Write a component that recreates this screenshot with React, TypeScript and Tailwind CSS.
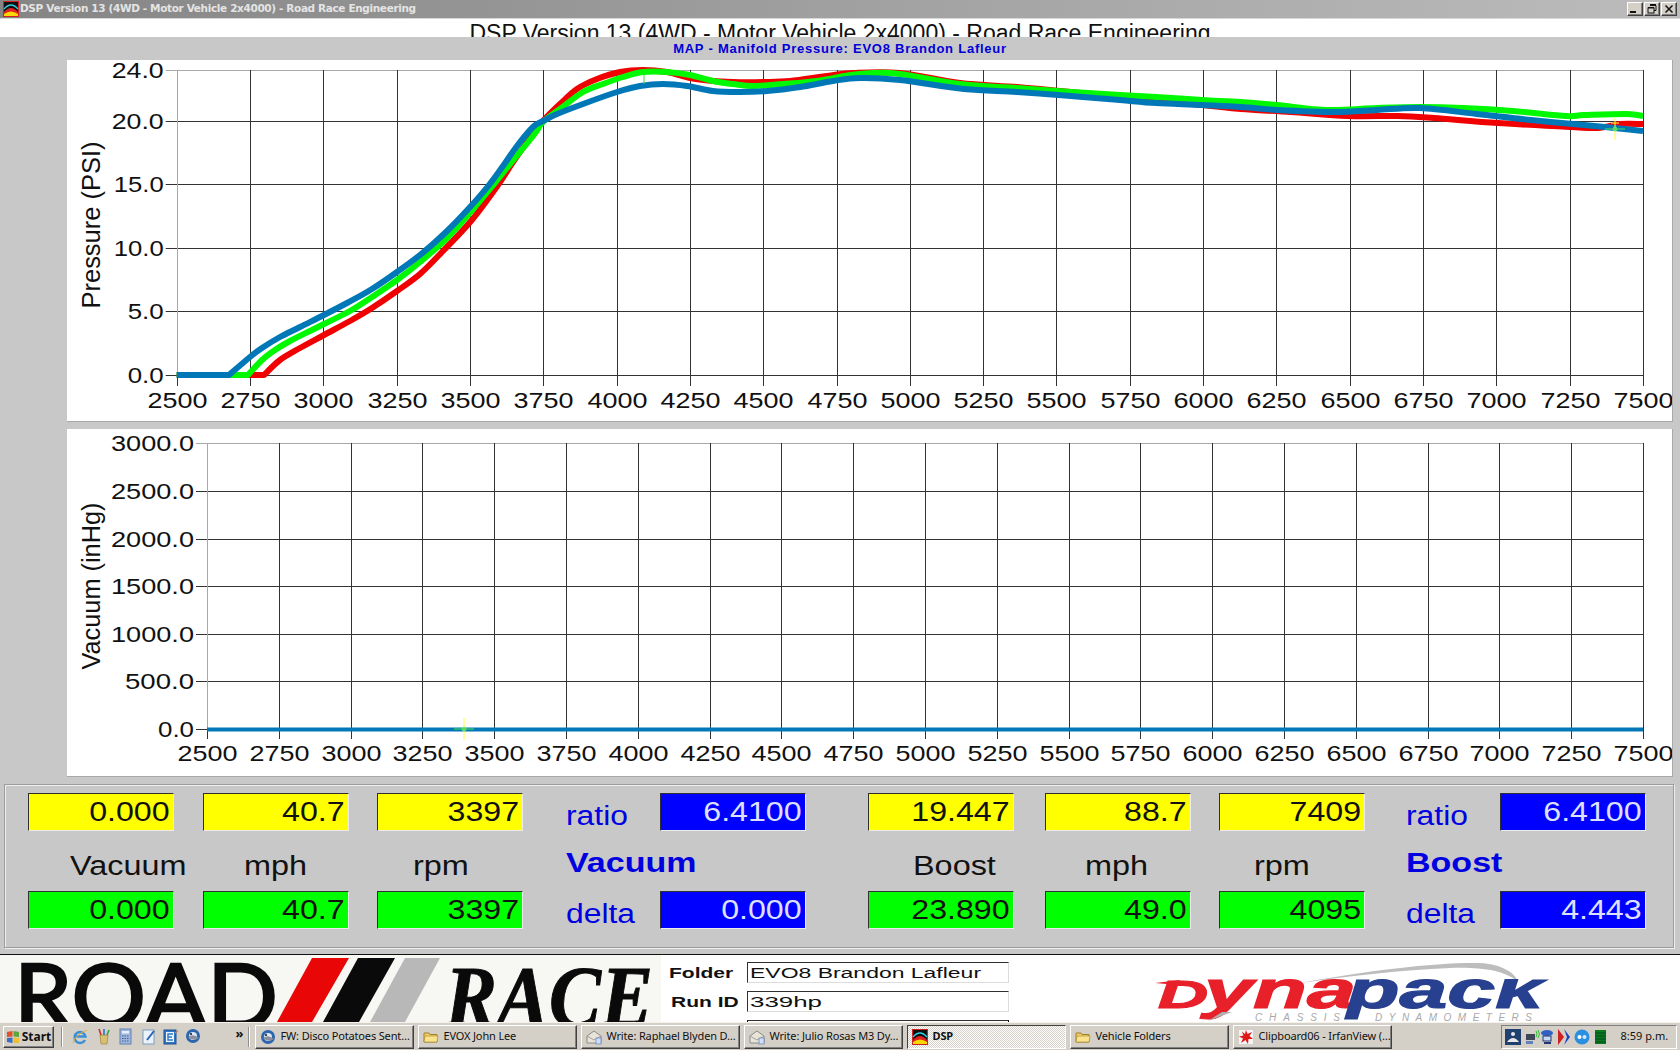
import React from 'react';

const sans = '"Liberation Sans", Arial, sans-serif';

const rpmTicks = Array.from({ length: 21 }, (_, i) => 2500 + i * 250);

const red = '176.7,376 264,376 280,361 300,349 324,336 350,322 372,309 397,292 420,275 443,252 471,222 498,186 513,163 533,135 543,122 560,105 577,90 597,80 620,73 643,71 667,73 690,79 713,82 733,83 763,83 790,82 827,77 853,74 900,74 960,84 1017,88 1071,93 1120,98 1202,106 1241,110 1291,113 1348,117 1398,117 1434,119 1498,124 1570,128 1598,129 1620,125 1643,125';
const green = '176.7,376 248,376 262,361 275,351 290,342 310,332 324,325 350,312 372,298 397,281 420,263 445,241 468,216 494,185 510,165 533,137 543,123 560,110 583,93 603,85 623,78 643,73 667,73 690,76 713,82 733,85 753,87 783,85 817,82 850,76 873,74 900,75 960,85 1017,89 1071,93 1120,96 1156,98 1202,101 1241,103 1277,106 1327,111 1377,109 1420,108 1463,109 1513,112 1566,117 1584,116 1627,115 1643,117';
const blue = '176.7,376 229,376 250,358 262,349 280,338 300,328 324,316 347,304 372,290 397,273 420,256 445,234 471,207 489,186 503,167 517,147 533,128 543,122 557,115 583,105 617,93 640,87 663,85 687,87 713,92 740,93 767,92 800,88 833,82 860,79 900,81 964,90 1017,93 1071,97 1120,101 1156,104 1202,106 1241,108 1277,111 1334,113 1377,111 1420,109 1477,115 1531,121 1584,126 1643,132';

// flat start, then a catmull-rom curve through the rest
function smooth(raw: string) {
  const pts = raw.split(' ').map((p) => p.split(',').map(Number));
  let d = `M${pts[0][0]} ${pts[0][1]} L${pts[1][0]} ${pts[1][1]}`;
  for (let i = 1; i < pts.length - 1; i++) {
    const a = i === 1 ? pts[1] : pts[i - 1];
    const b = pts[i];
    const c = pts[i + 1];
    const e = pts[i + 2] || c;
    const c1x = b[0] + (c[0] - a[0]) / 6;
    const c1y = b[1] + (c[1] - a[1]) / 6;
    const c2x = c[0] - (e[0] - b[0]) / 6;
    const c2y = c[1] - (e[1] - b[1]) / 6;
    d += ` C${c1x.toFixed(1)} ${c1y.toFixed(1)} ${c2x.toFixed(1)} ${c2y.toFixed(1)} ${c[0]} ${c[1]}`;
  }
  return d;
}

function Chart(props: {
  top: number;
  height: number;
  left: number;
  yTicks: { label: string; y: number; labelWidth: number }[];
  xLabelY: number;
  tickEnd: number;
  title: string;
  titleY: number;
  titleLen: number;
  children?: React.ReactNode;
}) {
  const { top, height, left, yTicks, xLabelY, tickEnd, title, titleY, titleLen, children } = props;
  const step = (1643 - left) / 20;
  const bottom = yTicks[yTicks.length - 1].y;
  const ceil = yTicks[0].y;
  return (
    <div className="bg-white border-r border-b border-[#a8a8a8]" style={{ height }}>
      <svg width="1605" height={height - 1} viewBox={`67 ${top} 1605 ${height - 1}`} className="block">
        <g fontFamily={sans} fill="#111">
          <text transform={`translate(100 ${titleY}) rotate(-90)`} fontSize="26" textAnchor="middle" textLength={titleLen} lengthAdjust="spacingAndGlyphs">
            {title}
          </text>
          {yTicks.map((t) => (
            <g key={t.label}>
              <text x={left - 13} y={t.y + 8} fontSize="22" textAnchor="end" textLength={t.labelWidth} lengthAdjust="spacingAndGlyphs">
                {t.label}
              </text>
              <line x1={left - 11} x2={1643} y1={t.y + 0.5} y2={t.y + 0.5} stroke={t.y === ceil ? '#a8a8a8' : '#333'} />
            </g>
          ))}
          {rpmTicks.map((r, i) => {
            const x = Math.round(left + i * step) + 0.5;
            return (
              <g key={r}>
                <line x1={x} x2={x} y1={ceil} y2={tickEnd} stroke={i === 0 ? '#a8a8a8' : '#333'} />
                <line x1={x} x2={x} y1={bottom} y2={tickEnd} stroke="#333" />
                <text x={x} y={xLabelY} fontSize="22" textAnchor="middle" textLength="60" lengthAdjust="spacingAndGlyphs">
                  {r}
                </text>
              </g>
            );
          })}
        </g>
        {children}
      </svg>
    </div>
  );
}

function Crosshair({ x, y }: { x: number; y: number }) {
  return (
    <g fill="none" strokeWidth="1">
      <line x1={x} x2={x} y1={y - 11} y2={y + 11} stroke="#ffff40" />
      <line x1={x - 10} x2={x + 10} y1={y} y2={y} stroke="#50e050" />
      <circle cx={x} cy={y} r="2" stroke="#60f060" />
    </g>
  );
}

function Stat({ value, kind }: { value: string; kind: 'y' | 'g' | 'b' }) {
  const bg = kind === 'y' ? 'bg-[#ffff00] text-[#111]' : kind === 'g' ? 'bg-[#00ff00] text-[#111]' : 'bg-[#0000ff] text-[#dfe0ff]';
  return (
    <div className={`${bg} w-[146px] h-[38px] flex items-center justify-end pr-[3px] pt-[1px] border border-t-[#303030] border-l-[#303030] border-r-[#ececec] border-b-[#ececec] text-[27px] leading-none`}>
      <span className="inline-block origin-right scale-x-[1.19]">{value}</span>
    </div>
  );
}

function ValueCol({ top, label, pad, bottom, className }: { top: string; label: string; pad: string; bottom: string; className: string }) {
  return (
    <div className={`${className} w-[146px] flex flex-col`}>
      <Stat value={top} kind="y" />
      <div className={`h-[60px] flex items-center pt-[10px] text-[27px] leading-none text-[#111] ${pad}`}>
        <span className="inline-block origin-left scale-x-[1.2]">{label}</span>
      </div>
      <Stat value={bottom} kind="g" />
    </div>
  );
}

function RatioCol({ name, ratio, delta, className }: { name: string; ratio: string; delta: string; className: string }) {
  return (
    <div className={`${className} flex`}>
      <div className="w-[94px] -ml-[1px] flex flex-col text-[#0000e0] text-[27px] leading-none">
        <div className="h-[38px] flex items-center pt-[8px]">
          <span className="inline-block origin-left scale-x-[1.18]">ratio</span>
        </div>
        <div className="h-[60px] flex items-center pt-[4px] font-bold">
          <span className="inline-block origin-left scale-x-[1.26]">{name}</span>
        </div>
        <div className="h-[38px] flex items-center pt-[8px]">
          <span className="inline-block origin-left scale-x-[1.18]">delta</span>
        </div>
      </div>
      <div className="flex flex-col gap-[60px]">
        <Stat value={ratio} kind="b" />
        <Stat value={delta} kind="b" />
      </div>
    </div>
  );
}

function DspIcon() {
  return (
    <svg width="16" height="16" viewBox="0 0 16 16" className="shrink-0">
      <rect width="16" height="16" fill="#d02020" />
      <rect x="1" y="1" width="14" height="14" fill="#101010" />
      <path d="M1 11 Q8 3 15 11 V15 H1 Z" fill="#e02020" />
      <path d="M1 13 Q8 8 15 13 V15 H1 Z" fill="#f8d800" />
      <path d="M1 8 Q8 0 15 8" fill="none" stroke="#30d0e0" strokeWidth="1.5" />
    </svg>
  );
}

function FolderIcon() {
  return (
    <svg width="16" height="16" viewBox="0 0 16 16" className="shrink-0">
      <path d="M1 4 L6 4 L7 5.5 L14 5.5 L14 13 L1 13 Z" fill="#f0d060" stroke="#a08030" />
      <path d="M2 7 L15 7 L14 13 L1 13 Z" fill="#fbe38c" stroke="#a08030" strokeWidth="0.6" />
    </svg>
  );
}

function MailIcon() {
  return (
    <svg width="16" height="16" viewBox="0 0 16 16" className="shrink-0">
      <path d="M1 7 L8 2 L15 7 L15 14 L1 14 Z" fill="#e8e4d8" stroke="#8a8a8a" />
      <path d="M1 7 L8 11 L15 7" fill="none" stroke="#a0a0a0" />
      <rect x="10" y="9" width="5" height="6" fill="#cfe0f8" stroke="#5070b0" strokeWidth="0.6" />
    </svg>
  );
}

function BirdIcon() {
  return (
    <svg width="16" height="16" viewBox="0 0 16 16" className="shrink-0">
      <circle cx="8" cy="8" r="7" fill="#2a66b0" />
      <circle cx="8" cy="8" r="4" fill="#dfe6f0" />
      <path d="M3 9 Q8 5 14 10 Q8 14 3 9" fill="#8a8f9c" />
      <circle cx="6" cy="6" r="1" fill="#111" />
    </svg>
  );
}

function IrfanIcon() {
  return (
    <svg width="16" height="16" viewBox="0 0 16 16" className="shrink-0">
      <rect x="1" y="1" width="14" height="14" fill="#f4f4f4" />
      <path d="M8 1 L9.5 5 L14 3 L11.5 7 L15 10 L10.5 10 L10 15 L7.5 11 L3 14 L5 9.5 L1 7.5 L5.5 6.5 L4 2.5 L7 5 Z" fill="#e01818" />
    </svg>
  );
}

function QuickIcon({ kind }: { kind: number }) {
  if (kind === 0)
    return (
      <svg width="17" height="17" viewBox="0 0 17 17">
        <path d="M13 12 A5.5 5.5 0 1 1 13.5 8.5 H3" fill="none" stroke="#3a8fd9" strokeWidth="2.4" />
        <path d="M1 15 Q3 7 15 2" fill="none" stroke="#e8b030" strokeWidth="1" />
      </svg>
    );
  if (kind === 1)
    return (
      <svg width="17" height="17" viewBox="0 0 17 17">
        <path d="M5 7 H13 L12 16 H6 Z" fill="#d8c070" stroke="#907830" strokeWidth="0.6" />
        <path d="M6 7 L4 1" stroke="#d03030" strokeWidth="1.6" />
        <path d="M9 7 L9 1" stroke="#3070c0" strokeWidth="1.6" />
        <path d="M12 7 L14 2" stroke="#30a040" strokeWidth="1.6" />
      </svg>
    );
  if (kind === 2)
    return (
      <svg width="17" height="17" viewBox="0 0 17 17">
        <rect x="3" y="1" width="11" height="15" fill="#9fb6de" stroke="#6580b0" />
        <rect x="5" y="3" width="7" height="2.5" fill="#e8f0fc" />
        <path d="M5 8 H12 M5 10.5 H12 M5 13 H12" stroke="#3f5f9c" strokeDasharray="1.5 1" />
      </svg>
    );
  if (kind === 3)
    return (
      <svg width="17" height="17" viewBox="0 0 17 17">
        <rect x="3" y="2" width="11" height="14" fill="#eaf3fb" stroke="#7c9cc0" />
        <path d="M7 12 L14 3" stroke="#2a62b0" strokeWidth="2" />
      </svg>
    );
  if (kind === 4)
    return (
      <svg width="17" height="17" viewBox="0 0 17 17">
        <rect x="2" y="2" width="12" height="14" fill="#2f78c8" stroke="#1f4f90" />
        <rect x="4" y="4" width="8" height="10" fill="#eef4fb" />
        <path d="M11 6 H6 V12 H11 M6 9 H10" fill="none" stroke="#2f78c8" strokeWidth="1.4" />
        <path d="M13 5 L16 3" stroke="#e08040" strokeWidth="1.4" />
      </svg>
    );
  return <BirdIcon />;
}

const taskItems: { label: string; icon: React.ReactNode; active?: boolean }[] = [
  { label: 'FW: Disco Potatoes Sent…', icon: <BirdIcon /> },
  { label: 'EVOX John Lee', icon: <FolderIcon /> },
  { label: 'Write: Raphael Blyden D…', icon: <MailIcon /> },
  { label: 'Write: Julio Rosas M3 Dy…', icon: <MailIcon /> },
  { label: 'DSP', icon: <DspIcon />, active: true },
  { label: 'Vehicle Folders', icon: <FolderIcon /> },
  { label: 'Clipboard06 - IrfanView (…', icon: <IrfanIcon /> },
];

const raised = 'border border-t-white border-l-white border-r-[#404040] border-b-[#404040] shadow-[inset_-1px_-1px_0_#808080]';

function Taskbar() {
  return (
    <div className="h-[28px] shrink-0 flex items-center bg-[#d4d0c8] border-t border-[#f4f2ec] pl-[3px] font-['Noto_Sans',sans-serif] text-[11px] text-[#111]">
      <button className={`${raised} w-[51px] h-[22px] flex items-center justify-center gap-[2px] font-bold text-[12px]`}>
        <svg width="14" height="14" viewBox="0 0 14 14">
          <path d="M1 2 L6.5 1 L6.5 6.5 L1 7 Z" fill="#e0502a" />
          <path d="M7.5 1 L13 2 L13 7 L7.5 6.5 Z" fill="#5aa83c" />
          <path d="M1 8 L6.5 7.5 L6.5 13 L1 12 Z" fill="#3a6fc8" />
          <path d="M7.5 7.5 L13 8 L13 13 L7.5 13 Z" fill="#f0c030" />
        </svg>
        Start
      </button>
      <div className="ml-[7px] w-[2px] h-[20px] border-l border-r border-l-[#909090] border-r-white" />
      <div className="ml-[9px] flex gap-[5.5px]">
        {[0, 1, 2, 3, 4, 5].map((k) => (
          <QuickIcon key={k} kind={k} />
        ))}
      </div>
      <span className="ml-[35px] text-[13px] font-bold leading-none -mt-[7px]">»</span>
      <div className="ml-[5px] w-[2px] h-[20px] border-l border-r border-l-[#909090] border-r-white" />
      <div className="ml-[5px] flex gap-[4px]">
        {taskItems.map((t) => (
          <div
            key={t.label}
            className={`w-[159px] h-[24px] flex items-center gap-[4px] pl-[4px] whitespace-nowrap overflow-hidden tracking-[-0.15px] ${
              t.active
                ? "border border-t-[#404040] border-l-[#404040] border-r-white border-b-white bg-[repeating-conic-gradient(#ffffff_0_25%,#d4d0c8_0_50%)] bg-[length:2px_2px] font-bold"
                : raised
            }`}
          >
            {t.icon}
            <span>{t.label}</span>
          </div>
        ))}
      </div>
      <div className="ml-[109px] w-[176px] h-[24px] flex items-center border border-t-[#808080] border-l-[#808080] border-r-white border-b-white pl-[3px]">
        <svg width="110" height="18" viewBox="0 0 110 18">
          <rect x="0" y="1" width="16" height="16" fill="#204070" />
          <path d="M2 14 Q8 6 14 14 Z" fill="#e8e8e8" />
          <circle cx="8" cy="6" r="2" fill="#e8e8e8" />
          <rect x="21" y="6" width="9" height="6" fill="#404858" />
          <rect x="21" y="13" width="7" height="3" fill="#6080c0" />
          <path d="M31 3 Q33 6 31 9 M33 2 Q36 6 33 10" fill="none" stroke="#30c030" />
          <ellipse cx="42" cy="5" rx="6" ry="3" fill="#3060c0" />
          <rect x="38" y="8" width="8" height="5" fill="#c8d8f0" stroke="#203878" />
          <rect x="39" y="14" width="7" height="2" fill="#203878" />
          <path d="M53 1 L59 9 L53 17 Z" fill="#d02020" />
          <path d="M59 1 L65 9 L59 17 L62 9 Z" fill="#2040c0" />
          <circle cx="77" cy="9" r="7.5" fill="#2a8fe0" />
          <circle cx="74.5" cy="9" r="2" fill="#fff" />
          <circle cx="79.5" cy="9" r="2" fill="#d8e8ff" />
          <rect x="90" y="2" width="11" height="14" fill="#0a7a1a" />
          <path d="M90 5 H101 M90 8 H101 M90 11 H101 M90 14 H101" stroke="#033" strokeWidth="0.7" />
        </svg>
        <span className="ml-[5px]">8:59 p.m.</span>
      </div>
    </div>
  );
}

function RoadRaceLogo() {
  return (
    <svg width="661" height="67" viewBox="0 955 661 67" className="block">
      <text x="14" y="1029" fontFamily='Lato, "Liberation Sans", sans-serif' fontWeight="400" fontSize="92" fill="#0a0a0a" stroke="#0a0a0a" strokeWidth="2.5" textLength="264" lengthAdjust="spacingAndGlyphs">
        ROAD
      </text>
      <polygon points="277,1022 312,1022 349,958 312,958" fill="#e80606" />
      <polygon points="323,1022 359,1022 395,958 358,958" fill="#0a0a0a" />
      <polygon points="370,1022 405,1022 440,958 405,958" fill="#b8b8b8" />
      <text x="445" y="1026" fontFamily='"Liberation Serif", serif' fontStyle="italic" fontWeight="700" fontSize="86" fill="#0a0a0a" stroke="#0a0a0a" strokeWidth="1" textLength="208" lengthAdjust="spacingAndGlyphs">
        RACE
      </text>
    </svg>
  );
}

function DynapackLogo() {
  return (
    <svg width="420" height="67" viewBox="1140 955 420 67" className="block shrink-0">
      <defs>
        <clipPath id="dyna-clip">
          <rect x="1140" y="979" width="420" height="43" />
        </clipPath>
      </defs>
      <path d="M1300 983 C1370 970 1440 962 1480 963 C1500 964 1515 972 1518 982 C1505 970 1480 967 1450 968 C1400 970 1350 976 1300 983 Z" fill="#bdbdbd" />
      <g clipPath="url(#dyna-clip)" fontFamily={sans} fontStyle="italic" fontWeight="700" strokeWidth="1.2">
        <text x="1158" y="1008" fontSize="39" fill="#e8202a" stroke="#e8202a" textLength="50" lengthAdjust="spacingAndGlyphs">
          D
        </text>
        <text x="1204" y="1008" fontSize="54" fill="#e8202a" stroke="#e8202a" textLength="152" lengthAdjust="spacingAndGlyphs">
          yna
        </text>
        <text x="1347" y="1008" fontSize="54" fill="#27408f" stroke="#27408f" textLength="196" lengthAdjust="spacingAndGlyphs">
          pack
        </text>
      </g>
      <path d="M1155 983 L1180 980 L1178 985 Z" fill="#e8202a" />
      <path d="M1208 1021 L1232 1012 L1222 1012 Z" fill="#b0b0b0" />
      <g fontFamily={sans} fontStyle="italic" fontSize="10" fill="#a8a8a8">
        <text x="1255" y="1021" textLength="85" lengthAdjust="spacing">CHASSIS</text>
        <text x="1375" y="1021" textLength="157" lengthAdjust="spacing">DYNAMOMETERS</text>
      </g>
    </svg>
  );
}

function FormRow({ label, value, pad, stretch }: { label: string; value: string; pad: string; stretch: string }) {
  return (
    <div className="flex items-center h-[21px]">
      <span className={`w-[85px] ${pad} font-bold text-[14px] leading-none text-[#111]`}>
        <span className="inline-block origin-left scale-x-[1.5]">{label}</span>
      </span>
      <div className="w-[262px] h-[21px] flex items-center pl-[2px] bg-white border border-t-[#303030] border-l-[#303030] border-r-[#dcdcdc] border-b-[#dcdcdc] text-[14px] leading-none text-[#111]">
        <span className={`inline-block origin-left ${stretch}`}>{value}</span>
      </div>
    </div>
  );
}

export default function App() {
  return (
    <div className="w-[1680px] h-[1050px] overflow-hidden flex flex-col bg-[#c8c8c8] font-['Liberation_Sans',Arial,sans-serif]">
      {/* window title */}
      <div className="h-[19px] shrink-0 flex items-center pl-[3px] pr-[3px] border-b border-[#d8d8d4] bg-gradient-to-r from-[#858585] to-[#bcbcbc]">
        <DspIcon />
        <span className="ml-[1px] text-[10.5px] font-bold font-['DejaVu_Sans',sans-serif] text-[#e4e4e4] whitespace-nowrap tracking-[-0.36px]">
          DSP Version 13 (4WD - Motor Vehicle 2x4000) - Road Race Engineering
        </span>
        <div className="ml-auto flex gap-[1px]">
          <div className={`${raised} w-[16px] h-[14px] flex items-end justify-start p-[2px] bg-[#d4d0c8]`}>
            <div className="w-[6px] h-[2px] bg-[#111]" />
          </div>
          <div className={`${raised} w-[16px] h-[14px] flex items-center justify-center bg-[#d4d0c8]`}>
            <svg width="10" height="10" viewBox="0 0 10 10" fill="none" stroke="#111">
              <path d="M3 1.5 H9 V6.5 H7" strokeWidth="1" />
              <path d="M3 0.5 H9" strokeWidth="1" />
              <rect x="1" y="4" width="6" height="5" fill="#d4d0c8" />
              <path d="M1 3.5 H7" strokeWidth="1" />
            </svg>
          </div>
          <div className={`${raised} w-[16px] h-[14px] flex items-center justify-center bg-[#d4d0c8]`}>
            <svg width="10" height="10" viewBox="0 0 10 10" fill="none" stroke="#111" strokeWidth="1.5">
              <path d="M1.5 1.5 L8.5 8.5 M8.5 1.5 L1.5 8.5" />
            </svg>
          </div>
        </div>
      </div>

      <div className="h-[18px] shrink-0 bg-white overflow-hidden flex justify-center">
        <span className="inline-block mt-[1px] text-[23px] leading-[26px] text-[#111] whitespace-nowrap">
          DSP Version 13 (4WD - Motor Vehicle 2x4000) - Road Race Engineering
        </span>
      </div>

      <div className="h-[23px] shrink-0 flex items-center justify-center text-[13px] font-bold text-[#0000d8] tracking-[0.76px]">
        MAP - Manifold Pressure: EVO8 Brandon Lafleur
      </div>

      {/* charts */}
      <div className="flex flex-col gap-[7px] pl-[67px] pr-[7px]">
        <Chart
          top={60}
          height={362}
          left={176.7}
          yTicks={[
            { label: '24.0', y: 70, labelWidth: 52 },
            { label: '20.0', y: 121, labelWidth: 52 },
            { label: '15.0', y: 184, labelWidth: 50 },
            { label: '10.0', y: 248, labelWidth: 50 },
            { label: '5.0', y: 311, labelWidth: 36 },
            { label: '0.0', y: 375, labelWidth: 36 },
          ]}
          xLabelY={408}
          tickEnd={386}
          title="Pressure (PSI)"
          titleY={225}
          titleLen={167}
        >
          <g fill="none" strokeWidth="6" strokeLinejoin="round" transform="translate(0 -1)">
            <path d={smooth(red)} stroke="#f00000" />
            <path d={smooth(green)} stroke="#00f800" />
            <path d={smooth(blue)} stroke="#0078b8" />
          </g>
          <line x1="644" x2="644" y1="75" y2="84" stroke="#30e030" />
          <Crosshair x={1615} y={129} />
          <line x1="1611" x2="1619" y1="123" y2="123" stroke="#ffff40" />
        </Chart>
        <Chart
          top={429}
          height={348}
          left={207}
          yTicks={[
            { label: '3000.0', y: 443, labelWidth: 83 },
            { label: '2500.0', y: 491, labelWidth: 83 },
            { label: '2000.0', y: 539, labelWidth: 83 },
            { label: '1500.0', y: 586, labelWidth: 83 },
            { label: '1000.0', y: 634, labelWidth: 83 },
            { label: '500.0', y: 681, labelWidth: 69 },
            { label: '0.0', y: 729, labelWidth: 36 },
          ]}
          xLabelY={761}
          tickEnd={739}
          title="Vacuum (inHg)"
          titleY={586}
          titleLen={167}
        >
          <line x1="207" x2="1643" y1="729.5" y2="729.5" stroke="#0078b8" strokeWidth="4" />
          <Crosshair x={464} y={729} />
        </Chart>
      </div>

      {/* readouts */}
      <div className="mt-[7px] ml-[4px] mr-[6px] h-[164px] shrink-0 flex pt-[8px] pl-[23px] border border-[#9c9c9c] shadow-[inset_1px_1px_0_#efefef,1px_1px_0_#efefef]">
        <ValueCol className="" top="0.000" label="Vacuum" pad="pl-[42px]" bottom="0.000" />
        <ValueCol className="ml-[29px]" top="40.7" label="mph" pad="pl-[41px]" bottom="40.7" />
        <ValueCol className="ml-[28px]" top="3397" label="rpm" pad="pl-[36px]" bottom="3397" />
        <RatioCol className="ml-[44px]" name="Vacuum" ratio="6.4100" delta="0.000" />
        <ValueCol className="ml-[62px]" top="19.447" label="Boost" pad="pl-[45px]" bottom="23.890" />
        <ValueCol className="ml-[31px]" top="88.7" label="mph" pad="pl-[40px]" bottom="49.0" />
        <ValueCol className="ml-[28px]" top="7409" label="rpm" pad="pl-[35px]" bottom="4095" />
        <RatioCol className="ml-[42px]" name="Boost" ratio="6.4100" delta="4.443" />
      </div>

      <div className="mt-[6px] h-[68px] shrink-0 flex bg-white border-t border-[#111] overflow-hidden">
        <div className="w-[661px] shrink-0 bg-[#f7f7f3]">
          <RoadRaceLogo />
        </div>
        <div className="w-[347px] shrink-0 ml-[1px] pt-[7px] flex flex-col gap-[8px]">
          <FormRow label="Folder" value="EVO8 Brandon Lafleur" pad="pl-[7px]" stretch="scale-x-[1.64]" />
          <FormRow label="Run ID" value="339hp" pad="pl-[9px]" stretch="scale-x-[1.85]" />
          <div className="ml-[85px] w-[262px] h-[21px] shrink-0 border border-t-[#303030]" />
        </div>
        <div className="ml-[131px]">
          <DynapackLogo />
        </div>
      </div>

      <Taskbar />
    </div>
  );
}
